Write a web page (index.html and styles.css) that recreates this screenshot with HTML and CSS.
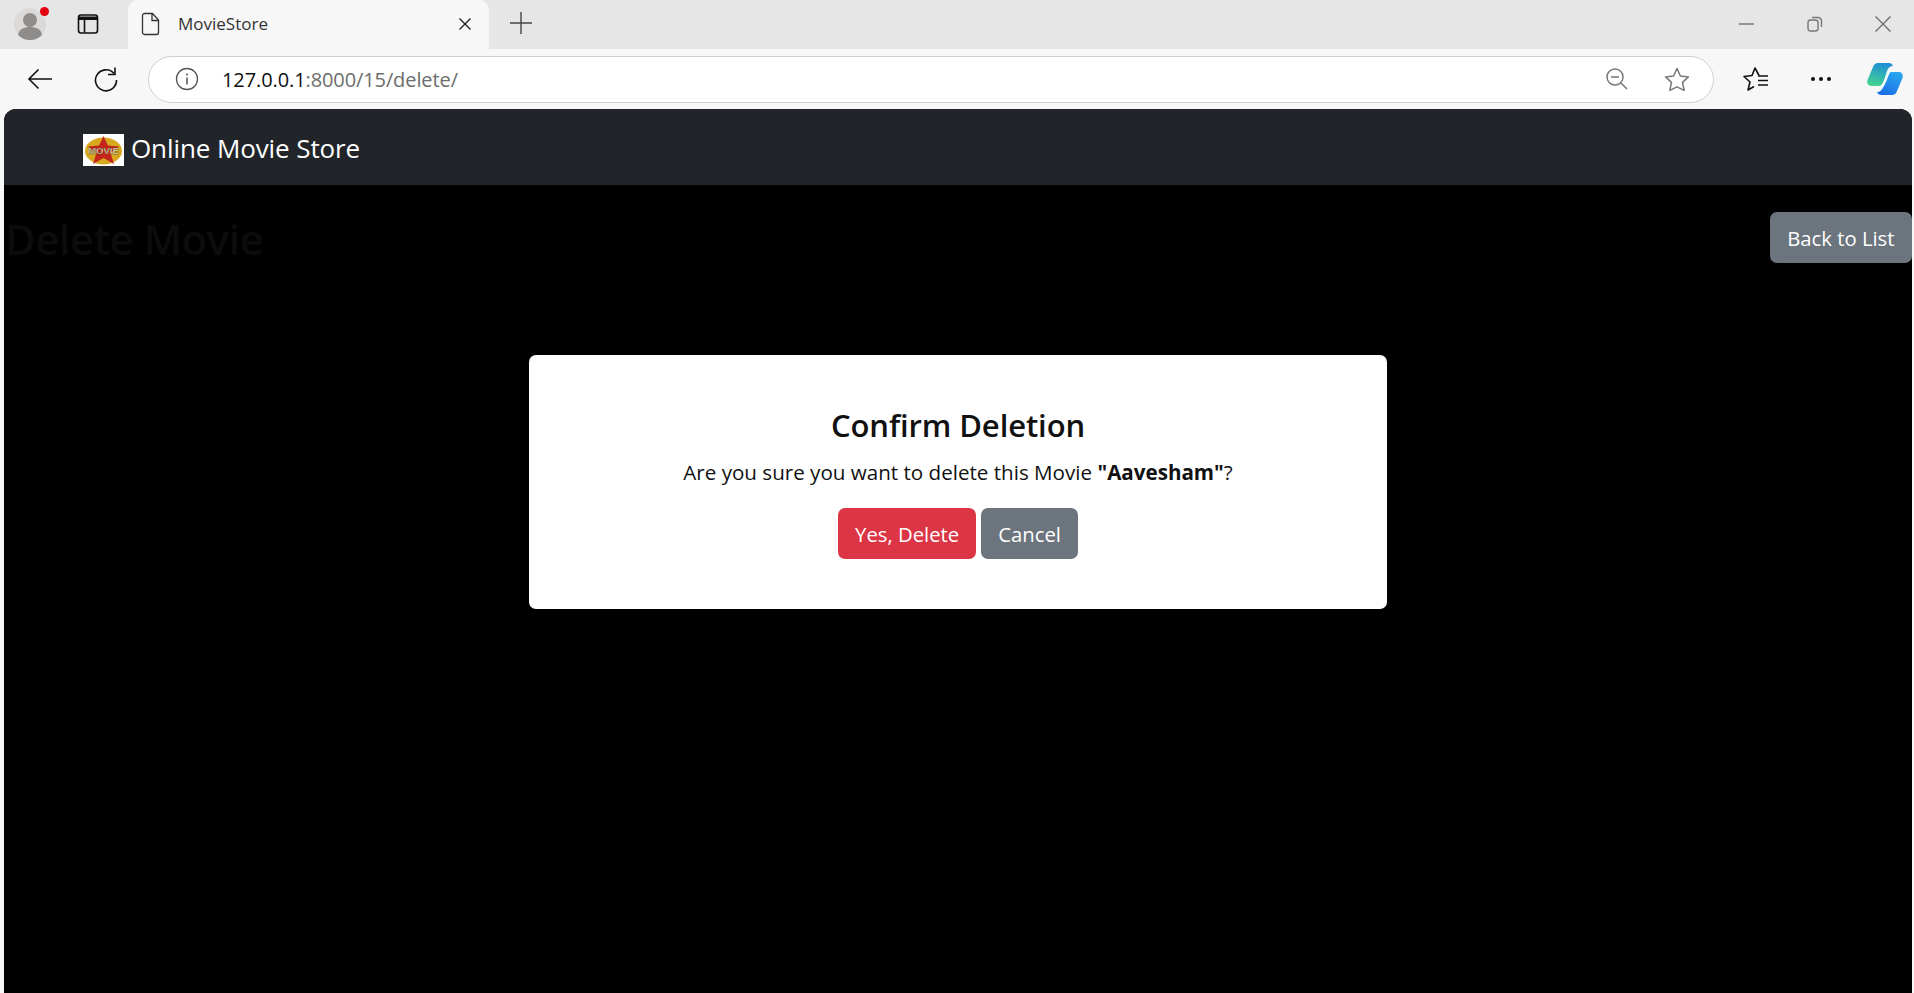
FILE: index.html
```html
<!DOCTYPE html>
<html lang="en">
<head>
<meta charset="utf-8" />
<title>MovieStore</title>
<link rel="stylesheet" href="styles.css">
</head>
<body>
<div class="tabbar">
  <div class="profile">
    <svg width="32" height="32" viewBox="0 0 32 32"><circle cx="16" cy="16" r="16" fill="#dcdad8"/><circle cx="16" cy="12" r="7" fill="#8f8d8b"/><path d="M4 27c1-6 6-8 12-8s11 2 12 8c-3 3-7 5-12 5s-9-2-12-5z" fill="#8f8d8b"/></svg>
    <span class="profile_dot"></span>
  </div>
  <div class="tab_btn">
    <svg width="22" height="22" viewBox="0 0 22 22"><rect x="1.5" y="2" width="19" height="18" rx="2.5" fill="none" stroke="#111" stroke-width="1.6"/><path d="M2 3.5h18V7H2z" fill="#111"/><path d="M7.5 7v12.5" stroke="#111" stroke-width="1.6"/></svg>
  </div>
  <div class="tab">
    <svg width="20" height="24" viewBox="0 0 20 24"><path d="M3.5 1.5h8l6 6.500V20.500a2 2 0 0 1-2 2h-12a2 2 0 0 1-2-2v-17a2 2 0 0 1 2-2zM11 1.500V8.500h6.500" fill="none" stroke="#333" stroke-width="1.300"/></svg>
    <span class="tab_title">MovieStore</span>
    <svg class="tab_close" width="14" height="14" viewBox="0 0 14 14"><path d="M1.500 1.500l11 11M12.500 1.500l-11 11" stroke="#222" stroke-width="1.400"/></svg>
  </div>
  <div class="new_tab">
    <svg width="22" height="22" viewBox="0 0 22 22"><path d="M11 0v22M0 11h22" stroke="#444" stroke-width="1.400"/></svg>
  </div>
  <div class="win_btns">
    <svg width="16" height="16" viewBox="0 0 16 16"><path d="M0 8h15" stroke="#777" stroke-width="1.500"/></svg>
    <svg width="16" height="16" viewBox="0 0 16 16"><rect x="1" y="4" width="10" height="11" rx="2.500" fill="none" stroke="#777" stroke-width="1.400"/><path d="M5 1.500h6a3.500 3.500 0 0 1 3.500 3.500v6" fill="none" stroke="#777" stroke-width="1.400"/></svg>
    <svg width="16" height="16" viewBox="0 0 16 16"><path d="M.5.500l15 15M15.500.500l-15 15" stroke="#777" stroke-width="1.500"/></svg>
  </div>
</div>

<div class="toolbar">
  <div class="nav_btn">
    <svg width="26" height="22" viewBox="0 0 26 22"><path d="M25 11H2M11.500 1.500L2 11l9.500 9.500" fill="none" stroke="#111" stroke-width="1.600"/></svg>
  </div>
  <div class="nav_btn">
    <svg width="26" height="26" viewBox="0 0 26 26"><path d="M21 7.500A10.500 10.500 0 1 0 23.500 14" fill="none" stroke="#111" stroke-width="1.600"/><path d="M22 1.500v7h-7" fill="none" stroke="#111" stroke-width="1.600"/></svg>
  </div>
  <div class="addr">
    <svg width="24" height="24" viewBox="0 0 24 24"><circle cx="12" cy="12" r="10.500" fill="none" stroke="#555" stroke-width="1.300"/><path d="M12 10.500v7" stroke="#555" stroke-width="1.500"/><circle cx="12" cy="7.500" r="1" fill="#555"/></svg>
    <span class="url"><span class="url_host">127.0.0.1</span>:8000/15/delete/</span>
    <svg class="addr_zoom" width="22" height="22" viewBox="0 0 22 22"><circle cx="9" cy="9" r="8" fill="none" stroke="#777" stroke-width="1.500"/><path d="M5 9h8M15 15l6 6" stroke="#777" stroke-width="1.500"/></svg>
    <svg class="addr_star" width="26" height="25" viewBox="0 0 26 25"><path d="M13 1.500l3.400 7.500 8.100.900-6 5.500 1.700 8L13 19.800l-7.200 3.600 1.700-8-6-5.500 8.100-.900z" fill="none" stroke="#777" stroke-width="1.500" stroke-linejoin="round"/></svg>
  </div>
  <div class="tool_icons">
    <svg width="26" height="24" viewBox="0 0 26 24"><path d="M16 8.500L12 1 9 8.500l-8 1 6 5.500-2 8 6-3.500" fill="none" stroke="#111" stroke-width="1.600" stroke-linejoin="round"/><path d="M15 9h10M15 13.500h10M15 18h10" stroke="#111" stroke-width="1.600"/></svg>
    <svg width="22" height="6" viewBox="0 0 22 6"><circle cx="3" cy="3" r="2" fill="#111"/><circle cx="11" cy="3" r="2" fill="#111"/><circle cx="19" cy="3" r="2" fill="#111"/></svg>
    <svg class="copilot" width="36" height="34" viewBox="0 0 36 34">
      <defs>
        <linearGradient id="copilot_a" x1="0.500" y1="0" x2="0.300" y2="1"><stop offset="0" stop-color="#1f8fd6"/><stop offset="1" stop-color="#45d68f"/></linearGradient>
        <linearGradient id="copilot_b" x1="0.800" y1="0" x2="0.300" y2="1"><stop offset="0" stop-color="#2aa8f0"/><stop offset="1" stop-color="#1c6fe6"/></linearGradient>
      </defs>
      <path d="M11 1h11c2 0 3 1 4 3-3 0-5 2-6 5l-3 10c-1 3-3 5-6 5H4C1 24-.5 21 .5 18L6 5c1-3 3-4 5-4z" fill="url(#copilot_a)"/>
      <path d="M25 33H14c-2 0-3-1-4-3 3 0 5-2 6-5l3-10c1-3 3-5 6-5h7c3 0 4.500 3 3.500 6L30 29c-1 3-3 4-5 4z" fill="url(#copilot_b)"/>
      <path d="M23 8c-3 3-4 13-9 18" fill="none" stroke="#f4fafa" stroke-width="2.500"/>
    </svg>
  </div>
</div>

<div class="page">
  <nav class="navbar">
    <svg class="logo" width="41" height="32" viewBox="0 0 41 32">
      <rect width="41" height="32" fill="#fff"/>
      <ellipse cx="20.500" cy="17" rx="18.500" ry="13.500" fill="#d8a81e"/>
      <path d="M20.500 2l4.500 9.500 11 1-8.500 6.500 3.500 11-10.500-6-10.500 6 3.500-11L5 12.500l11-1z" fill="#c4261b"/>
      <text x="20.500" y="20" text-anchor="middle" class="logo_text">MOVIE</text>
    </svg>
    <span class="brand">Online Movie Store</span>
  </nav>
  <div class="content">
    <div class="head_row">
      <h2 class="page_title">Delete Movie</h2>
      <a class="btn btn_grey btn_back" href="#">Back to List</a>
    </div>
    <div class="overlay">
      <div class="modal_box">
        <h4 class="modal_title">Confirm Deletion</h4>
        <p class="modal_msg">Are you sure you want to delete this Movie <strong>"Aavesham"</strong>?</p>
        <div class="modal_btns">
          <a class="btn btn_red" href="#">Yes, Delete</a>
          <a class="btn btn_grey" href="#">Cancel</a>
        </div>
      </div>
    </div>
  </div>
</div>
</body>
</html>
```

FILE: styles.css
```css
* { box-sizing: border-box; }
html, body { height: 100%; }
body { margin: 0; background: #f7f7f7; font-family: "Open Sans", "Noto Sans", sans-serif; overflow: hidden; display: flex; flex-direction: column; }
a { text-decoration: none; }

.tabbar { height: 49px; background: #e6e6e6; display: flex; align-items: center; padding: 0 0 2px 14px; flex: none; }
.profile { width: 32px; height: 32px; position: relative; }
.profile svg { display: block; }
.profile_dot { position: absolute; top: -1px; right: -3px; width: 9px; height: 9px; border-radius: 50%; background: #e3000f; }
.tab_btn { margin-left: 31px; width: 22px; height: 22px; }
.tab { margin: 0 0 -2px 29px; width: 361px; height: 49px; background: #f7f7f7; border-radius: 10px 10px 0 0; display: flex; align-items: center; padding: 0 17px 2px 13px; }
.tab_title { margin-left: 17px; font-size: 17px; color: #333; flex: 1; }
.new_tab { margin: 0 0 2px 21px; height: 22px; }
.win_btns { margin-left: auto; display: flex; gap: 52px; padding-right: 23px; }
.tabbar svg { display: block; }

.toolbar { height: 60px; display: flex; align-items: center; flex: none; padding: 0 11px 0 27px; }
.toolbar svg { display: block; flex: none; }
.nav_btn { width: 26px; display: flex; justify-content: center; margin-right: 40px; }
.nav_btn:nth-child(2) { margin-right: 29px; }
.addr { width: 1566px; height: 47px; background: #fff; border: 1.500px solid #cfcfcf; border-radius: 24px; display: flex; align-items: center; padding: 0 23px 0 26px; }
.url { margin-left: 23px; font-size: 20px; letter-spacing: -0.1px; color: #6d6d6d; flex: 1; }
.url_host { color: #111; }
.addr_zoom { margin-right: 36px; }
.tool_icons { margin-left: auto; display: flex; align-items: center; gap: 41px; }
.copilot { margin-left: -6px; }

.page { flex: 1; margin: 0 2px 0 4px; background: #000; border-radius: 12px 12px 0 0; overflow: hidden; display: flex; flex-direction: column; }
.navbar { height: 76px; background: #212529; display: flex; align-items: center; padding-left: 79px; flex: none; }
.logo { display: block; margin-top: 6px; }
.logo_text { font-family: "Liberation Sans", sans-serif; font-size: 9.500px; font-weight: 700; fill: #f7edc8; stroke: #3a2a10; stroke-width: 0.300px; }
.brand { margin: 2px 0 0 7px; font-size: 26px; color: #fff; letter-spacing: -0.1px; }

.content { flex: 1; position: relative; }
.head_row { display: flex; justify-content: space-between; align-items: flex-start; padding-top: 27px; }
.page_title { margin: 3px 0 0 1px; font-size: 42px; font-weight: 600; line-height: 48px; color: #0c0c0c; letter-spacing: -0.6px; }
.btn { display: inline-flex; align-items: center; height: 51px; padding: 0 17px; border-radius: 7px; font-size: 20.300px; color: #fff; }
.btn_back { padding: 0 17.500px; }
.btn_grey { background: #6c757d; }
.btn_red { background: #dc3545; }

.overlay { position: absolute; top: 170px; left: 0; right: 0; display: flex; justify-content: center; }
.modal_box { width: 858px; height: 254px; background: #fff; border-radius: 7px; text-align: center; padding-top: 50px; }
.modal_title { margin: 0; font-size: 31px; font-weight: 600; line-height: 40px; color: #111; letter-spacing: -0.1px; }
.modal_msg { margin: 12px 0 0; font-size: 20.600px; line-height: 30px; color: #111; }
.modal_msg strong { font-weight: 700; }
.modal_btns { margin-top: 21px; display: flex; justify-content: center; gap: 5px; }
```
